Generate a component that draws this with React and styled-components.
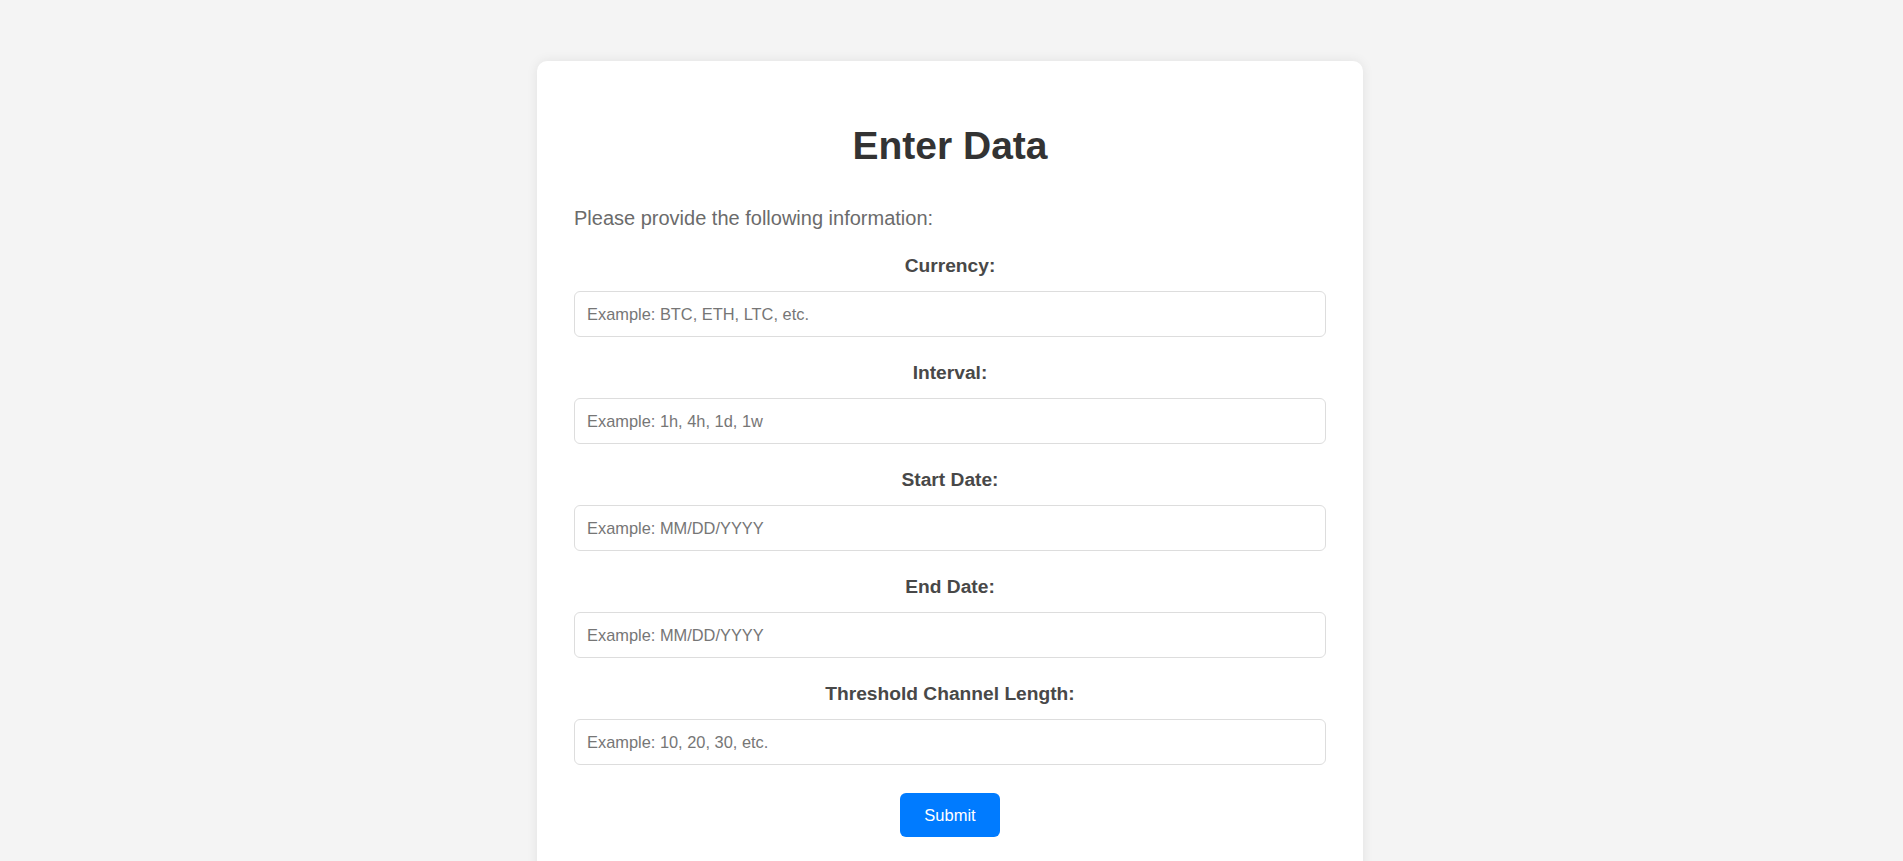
import React from "react";
import styled, { createGlobalStyle } from "styled-components";

const GlobalStyle = createGlobalStyle`
  body {
    margin: 0;
    padding-right: 3px;
    background: #f4f4f4;
    font-family: "Liberation Sans", Arial, sans-serif;
  }
`;

const fields = [
  { label: "Currency:", placeholder: "Example: BTC, ETH, LTC, etc." },
  { label: "Interval:", placeholder: "Example: 1h, 4h, 1d, 1w" },
  { label: "Start Date:", placeholder: "Example: MM/DD/YYYY" },
  { label: "End Date:", placeholder: "Example: MM/DD/YYYY" },
  { label: "Threshold Channel Length:", placeholder: "Example: 10, 20, 30, etc." },
];

const App = () => {
  return (
    <>
      <GlobalStyle />
      <Card>
        <Title>Enter Data</Title>
        <Intro>Please provide the following information:</Intro>
        <form onSubmit={(e) => e.preventDefault()}>
          {fields.map((field, index) => (
            <Field key={index}>
              <Label htmlFor={"field" + index}>{field.label}</Label>
              <Input id={"field" + index} type="text" placeholder={field.placeholder} />
            </Field>
          ))}
          <Actions>
            <SubmitButton type="submit">Submit</SubmitButton>
          </Actions>
        </form>
      </Card>
    </>
  );
};

const Card = styled.div`
  width: 826px;
  box-sizing: border-box;
  margin: 61px auto 40px;
  padding: 40px 37px 60px;
  background: #fff;
  border-radius: 10px;
  box-shadow: 0 0 12px rgba(0, 0, 0, 0.08);
`;

const Title = styled.h1`
  margin: 23px 0 39px;
  text-align: center;
  font-size: 39px;
  font-weight: bold;
  color: #333;
`;

const Intro = styled.p`
  margin: 0 0 25px;
  font-size: 20px;
  color: #6b6b6b;
`;

const Field = styled.div`
  display: flex;
  flex-direction: column;
  margin-bottom: 25px;
`;

const Label = styled.label`
  margin-bottom: 14px;
  text-align: center;
  font-size: 19.2px;
  font-weight: bold;
  color: #484848;
`;

const Input = styled.input`
  height: 46px;
  box-sizing: border-box;
  padding: 0 12px;
  border: 1px solid #ddd;
  border-radius: 6px;
  font-family: "Liberation Sans", Arial, sans-serif;
  font-size: 16.4px;
  color: #333;
  outline: none;

  &::placeholder {
    color: #767676;
  }
`;

const Actions = styled.div`
  display: flex;
  justify-content: center;
  padding-top: 3px;
`;

const SubmitButton = styled.button`
  height: 44px;
  padding: 0 24px;
  border: none;
  border-radius: 6px;
  background: #007bff;
  color: #fff;
  font-family: "Liberation Sans", Arial, sans-serif;
  font-size: 16.5px;
  cursor: pointer;
`;

export default App;
